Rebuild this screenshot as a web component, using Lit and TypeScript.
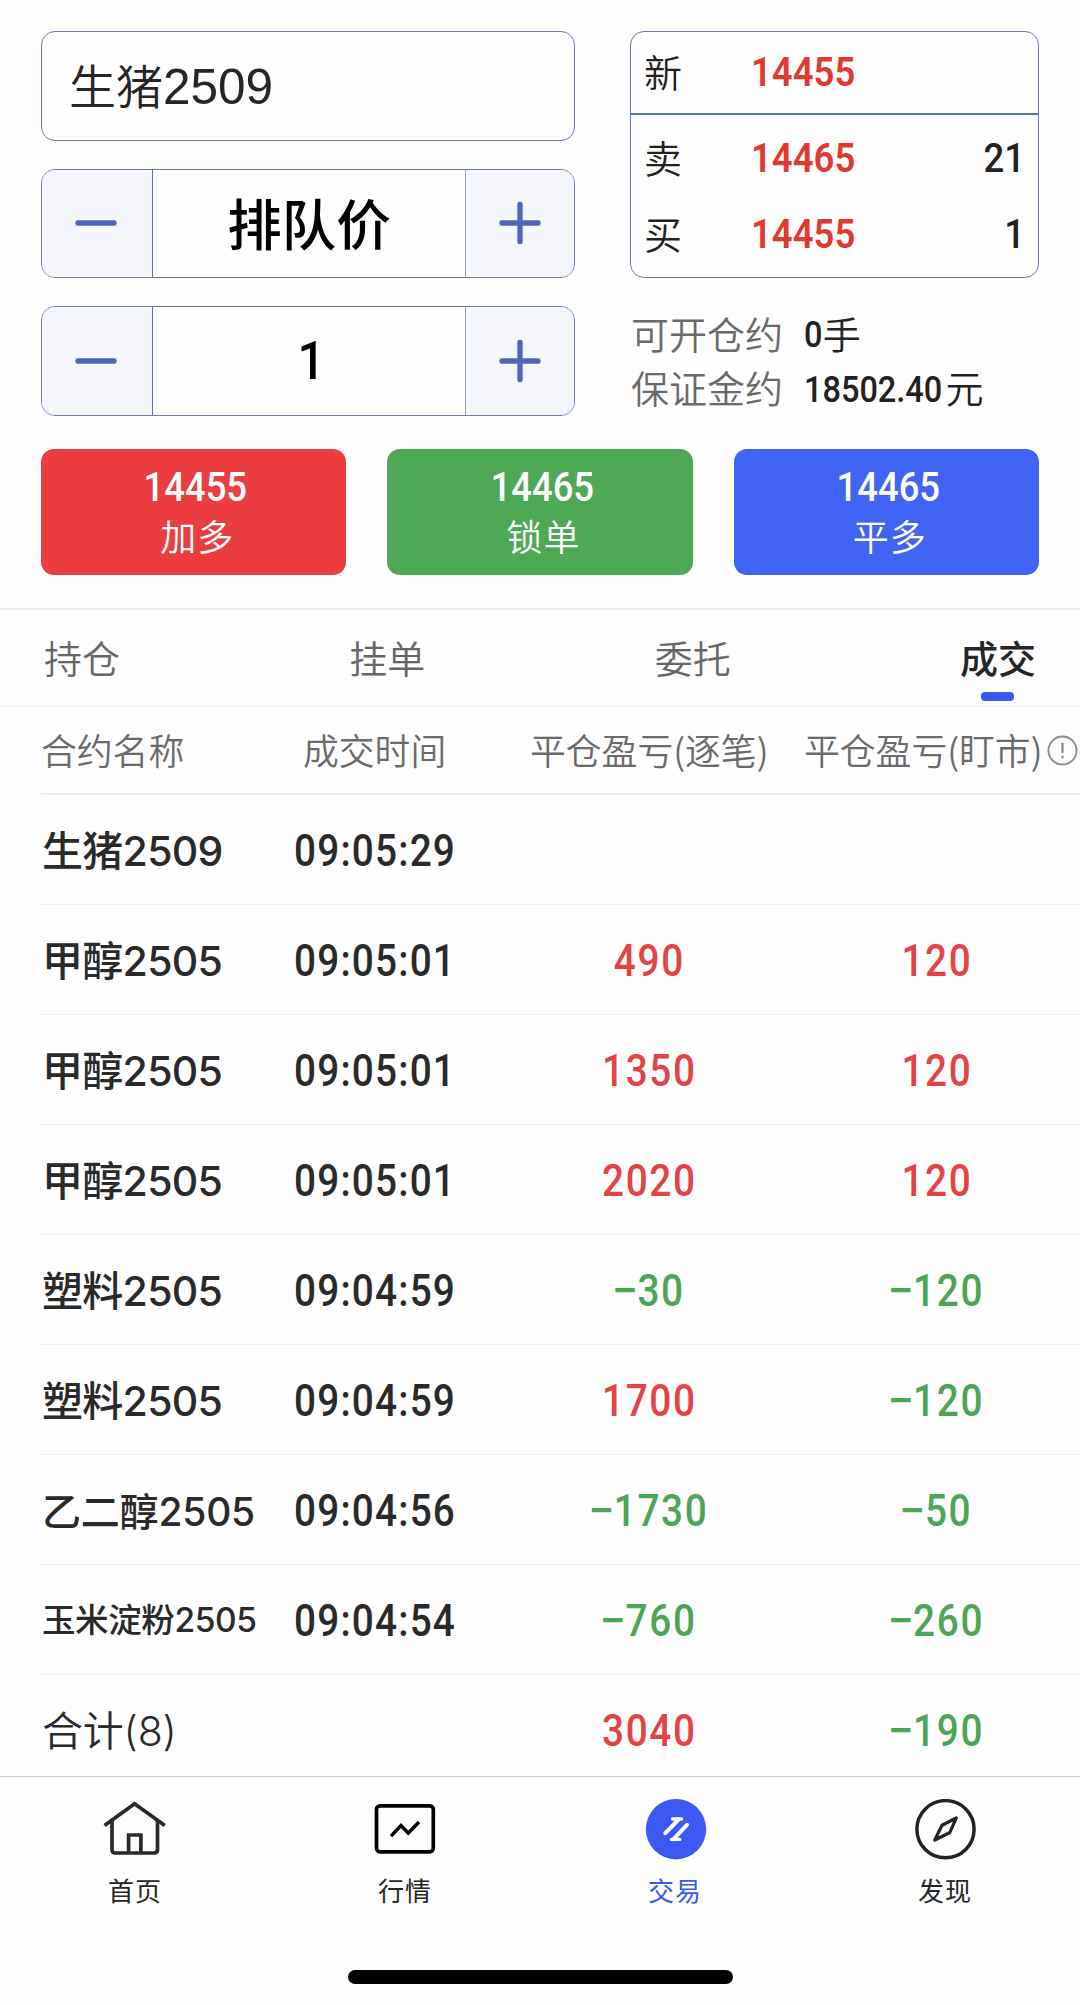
import { LitElement, html, css, svg } from "lit";
import { customElement } from "lit/decorators.js";
import { classMap } from "lit/directives/class-map.js";

interface Trade {
  name: string;
  time: string;
  byTrade: string;
  byDay: string;
}

const TRADES: Trade[] = [
  { name: "生猪2509", time: "09:05:29", byTrade: "", byDay: "" },
  { name: "甲醇2505", time: "09:05:01", byTrade: "490", byDay: "120" },
  { name: "甲醇2505", time: "09:05:01", byTrade: "1350", byDay: "120" },
  { name: "甲醇2505", time: "09:05:01", byTrade: "2020", byDay: "120" },
  { name: "塑料2505", time: "09:04:59", byTrade: "−30", byDay: "−120" },
  { name: "塑料2505", time: "09:04:59", byTrade: "1700", byDay: "−120" },
  { name: "乙二醇2505", time: "09:04:56", byTrade: "−1730", byDay: "−50" },
  { name: "玉米淀粉2505", time: "09:04:54", byTrade: "−760", byDay: "−260" },
  { name: "合计(8)", time: "", byTrade: "3040", byDay: "−190" },
];

const homeIcon = svg`<svg width="64" height="62" viewBox="0 0 64 62" fill="none" stroke="#2a2a2a" stroke-width="3.7">
  <path d="M1.5 26.5 31.6 4.8 61.8 26.5"/>
  <path d="M9 22V50.5q0 3.5 3.5 3.5H51q3.500 0 3.500-3.500V22"/>
  <path d="M25.600 54V36h12.300V54"/>
</svg>`;
const marketIcon = svg`<svg width="64" height="62" viewBox="0 0 64 62" fill="none" stroke="#000" stroke-width="3.7">
  <rect x="3.500" y="6.800" width="56.800" height="46" rx="3.500"/>
  <path d="M18 37.200 28 26.500 35.300 34 46 23" stroke-width="3.400"/>
</svg>`;
const tradeIcon = svg`<svg width="64" height="62" viewBox="0 0 64 62">
  <circle cx="33" cy="30.200" r="30.200" fill="#3b57f4"/>
  <path d="M22.300 34.200 36 20.100M44 25.800 30.500 40.200" fill="none" stroke="#fff" stroke-width="4" stroke-linecap="round"/>
  <path d="M29.500 20H38.500M28.300 40.400H36.800" fill="none" stroke="#fff" stroke-width="3.400" stroke-linecap="round"/>
</svg>`;
const compassIcon = svg`<svg width="64" height="62" viewBox="0 0 64 62" fill="none" stroke="#232323" stroke-width="3.500">
  <circle cx="32.500" cy="30.200" r="28.600"/>
  <path d="M43.300 19 36.600 33.800 21.800 41 29 26.300Z" stroke-width="3.200" stroke-linejoin="round"/>
</svg>`;

const NAV = [
  { label: "首页", icon: homeIcon, on: false },
  { label: "行情", icon: marketIcon, on: false },
  { label: "交易", icon: tradeIcon, on: true },
  { label: "发现", icon: compassIcon, on: false },
];

@customElement("app-root")
export class AppRoot extends LitElement {
  static styles = css`
    :host {
      display: flex;
      flex-direction: column;
      width: 1080px;
      height: 2005px;
      overflow: hidden;
      background: #fefefe;
      color: #262626;
      font-family: "Noto Sans CJK SC", sans-serif;
      font-weight: 350;
      line-height: 1;
      white-space: nowrap;
    }
    * { box-sizing: border-box; }
    svg { display: block; }
    .num {
      display: inline-block;
      font-family: Roboto, sans-serif;
      font-weight: 500;
      transform: scaleX(0.89);
    }
    .order {
      display: grid;
      grid-template-columns: 534px 408.5px;
      column-gap: 55px;
      padding: 31px 0 0 41px;
      height: 417px;
    }
    .inputs { display: flex; flex-direction: column; gap: 28px; }
    .field, .stepper {
      display: flex;
      align-items: center;
      height: 109.5px;
      border: 1.5px solid #6a7ab4;
      border-radius: 14px;
      overflow: hidden;
    }
    .field {
      align-items: baseline;
      padding: 28px 0 0 27px;
      font-size: 47px;
    }
    .field .code {
      font-family: "Liberation Sans", sans-serif;
      font-size: 49.5px;
    }
    .step {
      display: grid;
      place-items: center;
      width: 110px;
      height: 100%;
      padding-right: 3px;
      background: #f4f6fc;
    }
    .step.more { width: 108px; padding-right: 0; }
    .value {
      flex: 1;
      height: 100%;
      display: grid;
      place-items: center;
      border-left: 1.5px solid #5a6fb0;
      border-right: 1.5px solid #8e99c4;
      padding-bottom: 2px;
      color: #000;
      font-size: 54.5px;
      font-weight: 500;
    }
    .value .num { padding-left: 4px; }
    .info { display: flex; flex-direction: column; }
    .quote {
      height: 247px;
      border: 1.5px solid #6a7ab4;
      border-radius: 14px;
      font-size: 38px;
      color: #222;
    }
    .qrow {
      display: grid;
      grid-template-columns: 107px 1fr 60px;
      align-items: center;
      height: 76px;
      padding: 0 13px 0 13px;
    }
    .qrow > :first-child { margin-top: -3px; }
    .qrow.last { height: 83px; border-bottom: 2px solid #5a71b0; }
    .qrow.sell { margin-top: 5px; }
    .qrow .num { font-size: 41px; }
    .qrow .price { color: #df3932; font-weight: 600; transform-origin: left; }
    .qrow .qty { transform-origin: right; text-align: right; }
    .limits { padding: 30px 0 0 1px; font-size: 38px; }
    .limit { display: flex; align-items: center; height: 54.5px; gap: 21px; }
    .limit .k { color: #6a6a6a; margin-top: -5px; }
    .limit .v { display: flex; align-items: center; color: #222; }
    .limit .cjk { margin-top: -5px; }
    .limit .num { font-size: 36.5px; transform-origin: left; margin-right: -14px; }
    .limit .num.short { margin-right: -2px; }
    .actions { display: flex; gap: 41px; padding: 31.5px 41px 0; height: 191px; }
    .action {
      flex: 1;
      height: 126.5px;
      border-radius: 13px;
      display: flex;
      flex-direction: column;
      align-items: center;
      padding: 17px 0 0 4px;
      color: #fff;
      font-size: 36px;
    }
    .action .num { font-size: 41px; line-height: 42px; }
    .action .t { line-height: 54px; letter-spacing: 1px; padding-left: 3px; }
    .red { background: #eb3e41; }
    .green { background: #4ea955; }
    .blue { background: #4064f3; }
    .tabs {
      display: flex;
      justify-content: space-between;
      height: 99px;
      border-top: 2px solid #ececec;
      border-bottom: 1.5px solid #f0f0f0;
      padding: 0 44px;
      font-size: 38px;
      color: #666;
    }
    .tab { display: flex; flex-direction: column; align-items: center; padding-top: 28px; }
    .tab.on { color: #262626; font-weight: 500; }
    .tab.on::after {
      content: "";
      width: 33px;
      height: 9px;
      margin-top: 16px;
      border-radius: 4px;
      background: #3b59ea;
    }
    .list { padding-left: 41px; flex: 1; overflow: hidden; }
    .head, .row {
      display: grid;
      grid-template-columns: 253px 224px 261px 301px;
      align-items: center;
    }
    .head {
      height: 88px;
      border-bottom: 2px solid #ececec;
      color: #6a6a6a;
      font-size: 35.8px;
    }
    .head .c2 { padding-left: 9px; }
    .head .c3 { padding-left: 12px; }
    .head .c4 { padding-left: 25px; display: flex; align-items: center; gap: 5px; }
    .head svg { margin-top: 2px; }
    .row { height: 110px; border-bottom: 1.5px solid #efefef; color: #2a2a2a; padding-top: 3px; }
    .row .name {
      font-family: Inter, "Noto Sans CJK SC", sans-serif;
      font-weight: 500;
      font-size: 41px;
      letter-spacing: -0.7px;
      padding-left: 1px;
    }
    .row .name.mid { font-size: 39px; letter-spacing: -0.2px; }
    .row .name.small { font-size: 33.5px; letter-spacing: -0.4px; }
    .row .name.sum { font-weight: 350; letter-spacing: -0.2px; }
    .row .num { font-size: 44.5px; letter-spacing: 0.043em; transform: scaleX(0.87); }
    .row .time { transform-origin: left; letter-spacing: 0.031em; }
    .row .pl { text-align: center; padding-left: 2px; }
    .row .day { padding-left: 17px; }
    .sign { display: inline-block; transform: scaleX(1.2); }
    .up { color: #e44345; }
    .down { color: #4ea457; }
    .nav {
      display: flex;
      height: 229.5px;
      border-top: 1.5px solid #cccccc;
      flex-direction: column;
      align-items: center;
      background: #fefefe;
    }
    .items { display: flex; width: 1080px; height: 193px; flex: none; }
    .item {
      flex: 1;
      display: flex;
      flex-direction: column;
      align-items: center;
      padding-top: 22px;
      font-size: 26px;
      font-weight: 400;
      gap: 16px;
      letter-spacing: 1px;
    }
    .item.on { color: #3b59ea; }
    .bar { width: 385px; height: 14px; border-radius: 7px; background: #000; }
  `;

  private minus() {
    return html`<svg width="44" height="44" viewBox="0 0 44 44" stroke="#4f66b8" stroke-width="5.5" stroke-linecap="round"><path d="M4 22H40"/></svg>`;
  }

  private plus() {
    return html`<svg width="44" height="44" viewBox="0 0 44 44" stroke="#4f66b8" stroke-width="5.3" stroke-linecap="round"><path d="M4 22H40M22 3.500V40.500"/></svg>`;
  }

  private pl(v: string, day = false) {
    if (!v) return html`<span></span>`;
    const down = v.startsWith("−");
    const cls = classMap({ pl: true, num: true, day, up: !down, down });
    return down
      ? html`<span class=${cls}><span class="sign">−</span>${v.slice(1)}</span>`
      : html`<span class=${cls}>${v}</span>`;
  }

  private nameClass(name: string) {
    const total = name.startsWith("合计");
    return classMap({ name: true, mid: name.length === 7 && !total, small: name.length > 7, sum: total });
  }

  render() {
    return html`
      <section class="order">
        <div class="inputs">
          <div class="field"><span>生猪</span><span class="code">2509</span></div>
          <div class="stepper">
            <div class="step">${this.minus()}</div>
            <div class="value">排队价</div>
            <div class="step more">${this.plus()}</div>
          </div>
          <div class="stepper">
            <div class="step">${this.minus()}</div>
            <div class="value"><span class="num">1</span></div>
            <div class="step more">${this.plus()}</div>
          </div>
        </div>
        <div class="info">
          <div class="quote">
            <div class="qrow last"><span>新</span><span class="num price">14455</span></div>
            <div class="qrow sell"><span>卖</span><span class="num price">14465</span><span class="num qty">21</span></div>
            <div class="qrow"><span>买</span><span class="num price">14455</span><span class="num qty">1</span></div>
          </div>
          <div class="limits">
            <div class="limit"><span class="k">可开仓约</span><span class="v"><span class="num short">0</span><span class="cjk">手</span></span></div>
            <div class="limit"><span class="k">保证金约</span><span class="v"><span class="num">18502.40</span><span class="cjk">元</span></span></div>
          </div>
        </div>
      </section>
      <section class="actions">
        <div class="action red"><span class="num">14455</span><span class="t">加多</span></div>
        <div class="action green"><span class="num">14465</span><span class="t">锁单</span></div>
        <div class="action blue"><span class="num">14465</span><span class="t">平多</span></div>
      </section>
      <nav class="tabs">
        <div class="tab">持仓</div>
        <div class="tab">挂单</div>
        <div class="tab">委托</div>
        <div class="tab on">成交</div>
      </nav>
      <section class="list">
        <div class="head">
          <span>合约名称</span>
          <span class="c2">成交时间</span>
          <span class="c3">平仓盈亏(逐笔)</span>
          <span class="c4">平仓盈亏(盯市)
            <svg width="31" height="31" viewBox="0 0 32 32" fill="none" stroke="#8e8e8e" stroke-width="2">
              <circle cx="16" cy="16" r="14.500"/><path d="M16 8V18.500M16 21.500V24" stroke-width="2.400"/>
            </svg>
          </span>
        </div>
        ${TRADES.map(
          (t) => html`<div class="row">
            <span class=${this.nameClass(t.name)}>${t.name}</span>
            <span class="num time">${t.time}</span>
            ${this.pl(t.byTrade)}${this.pl(t.byDay, true)}
          </div>`
        )}
      </section>
      <footer class="nav">
        <div class="items">
          ${NAV.map((n) => html`<div class=${classMap({ item: true, on: n.on })}>${n.icon}<span>${n.label}</span></div>`)}
        </div>
        <div class="bar"></div>
      </footer>
    `;
  }
}
